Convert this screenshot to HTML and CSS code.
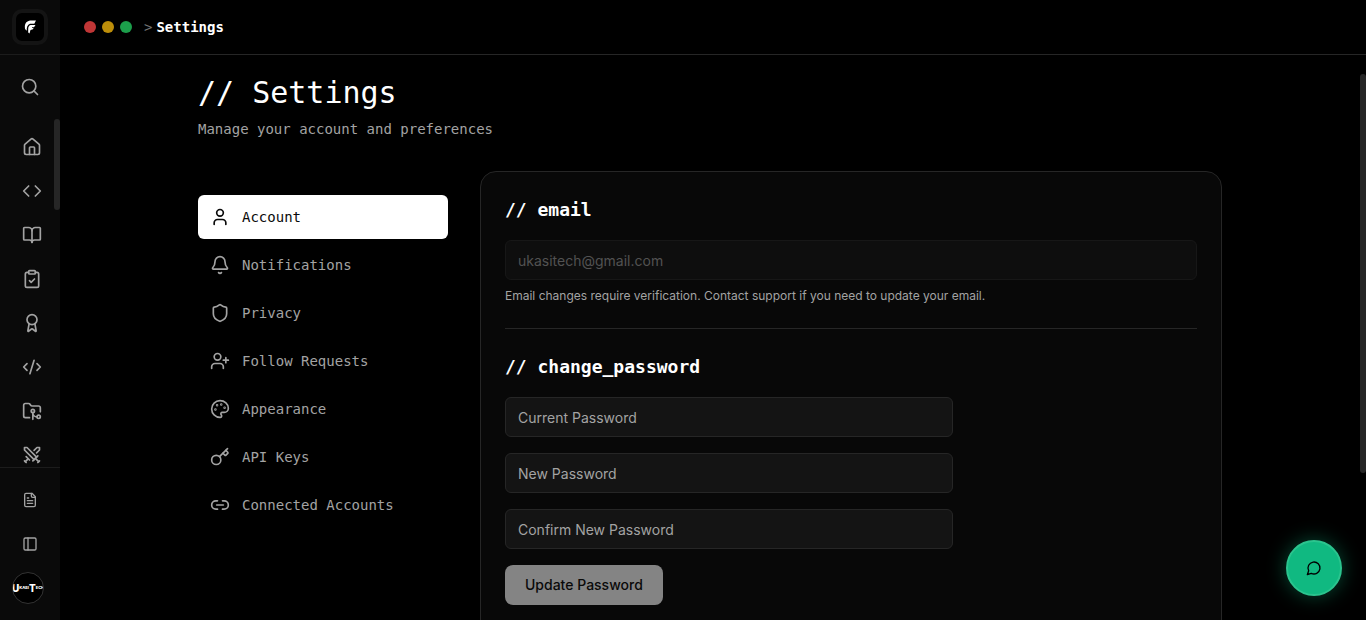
FILE: index.html
```html
<!DOCTYPE html>
<html lang="en">
<head>
    <meta charset="UTF-8">
    <meta name="viewport" content="width=device-width, initial-scale=1.0">
    <title>Settings</title>
    <link rel="stylesheet" href="styles.css">
</head>
<body>
    <div class="app">
        <aside class="sidebar">
            <div class="sidebar-head">
                <a href="#" class="logo" aria-label="Home">
                    <svg viewBox="0 0 28 28" width="28" height="28" fill="#fff"><path d="M20 7.500h-6c-3 .5-5 2.500-5.200 5.500l.2 3 1.800 1.800c-.3-3.500.7-6 3.200-7h4.300z"/><path d="M19.500 12h-5c-1.500.5-2.300 2-2.300 4v3.500l1.300 1 1-3.500 2.500-.8.500-1.200h-1.500v-.8h2z"/></svg>
                </a>
            </div>
            <div class="sidebar-search">
                <button type="button" class="side-btn" aria-label="Search">
                    <svg class="icon" viewBox="0 0 24 24"><circle cx="11" cy="11" r="8"/><path d="m21 21-4.300-4.300"/></svg>
                </button>
            </div>
            <nav class="sidebar-nav" aria-label="Main">
                <a href="#" class="side-btn" aria-label="Dashboard">
                    <svg class="icon" viewBox="0 0 24 24"><path d="M15 21v-8a1 1 0 0 0-1-1h-4a1 1 0 0 0-1 1v8"/><path d="M3 10a2 2 0 0 1 .709-1.528l7-5.999a2 2 0 0 1 2.582 0l7 5.999A2 2 0 0 1 21 10v9a2 2 0 0 1-2 2H5a2 2 0 0 1-2-2z"/></svg>
                </a>
                <a href="#" class="side-btn" aria-label="Code">
                    <svg class="icon" viewBox="0 0 24 24"><path d="m16 18 6-6-6-6"/><path d="m8 6-6 6 6 6"/></svg>
                </a>
                <a href="#" class="side-btn" aria-label="Courses">
                    <svg class="icon" viewBox="0 0 24 24"><path d="M12 7v14"/><path d="M3 18a1 1 0 0 1-1-1V4a1 1 0 0 1 1-1h5a4 4 0 0 1 4 4 4 4 0 0 1 4-4h5a1 1 0 0 1 1 1v13a1 1 0 0 1-1 1h-6a3 3 0 0 0-3 3 3 3 0 0 0-3-3z"/></svg>
                </a>
                <a href="#" class="side-btn" aria-label="Assessments">
                    <svg class="icon" viewBox="0 0 24 24"><rect width="8" height="4" x="8" y="2" rx="1"/><path d="M16 4h2a2 2 0 0 1 2 2v14a2 2 0 0 1-2 2H6a2 2 0 0 1-2-2V6a2 2 0 0 1 2-2h2"/><path d="m9 14 2 2 4-4"/></svg>
                </a>
                <a href="#" class="side-btn" aria-label="Certificates">
                    <svg class="icon" viewBox="0 0 24 24"><path d="m15.477 12.890 1.515 8.526a.5.5 0 0 1-.810.470l-3.580-2.687a1 1 0 0 0-1.197 0l-3.586 2.686a.5.5 0 0 1-.810-.469l1.514-8.526"/><circle cx="12" cy="8" r="6"/></svg>
                </a>
                <a href="#" class="side-btn" aria-label="Challenges">
                    <svg class="icon" viewBox="0 0 24 24"><path d="m18 16 4-4-4-4"/><path d="m6 8-4 4 4 4"/><path d="m14.500 4-5 16"/></svg>
                </a>
                <a href="#" class="side-btn" aria-label="Projects">
                    <svg class="icon" viewBox="0 0 24 24"><path d="M9 20H4a2 2 0 0 1-2-2V5a2 2 0 0 1 2-2h3.900a2 2 0 0 1 1.690.900l.810 1.200a2 2 0 0 0 1.670.900H20a2 2 0 0 1 2 2v5"/><circle cx="13" cy="12" r="2"/><path d="M18 19c-2.800 0-5-2.200-5-5v8"/><circle cx="20" cy="19" r="2"/></svg>
                </a>
                <a href="#" class="side-btn" aria-label="Battles">
                    <svg class="icon" viewBox="0 0 24 24"><path d="M14.500 17.500 3 6V3h3l11.500 11.500"/><path d="m13 19 6-6"/><path d="m16 16 4 4"/><path d="m19 21 2-2"/><path d="M14.500 6.500 18 3h3v3l-3.500 3.500"/><path d="m5 14 4 4"/><path d="m7 17-3 3"/><path d="m3 19 2 2"/></svg>
                </a>
                <span class="scroll-thumb scroll-thumb-side"></span>
            </nav>
            <div class="sidebar-foot">
                <button type="button" class="side-btn" aria-label="Docs">
                    <svg class="icon icon-sm" viewBox="0 0 24 24"><path d="M15 2H6a2 2 0 0 0-2 2v16a2 2 0 0 0 2 2h12a2 2 0 0 0 2-2V7z"/><path d="M14 2v4a2 2 0 0 0 2 2h4"/><path d="M10 9H8"/><path d="M16 13H8"/><path d="M16 17H8"/></svg>
                </button>
                <button type="button" class="side-btn" aria-label="Toggle sidebar">
                    <svg class="icon icon-sm" viewBox="0 0 24 24"><rect width="18" height="18" x="3" y="3" rx="2"/><path d="M9 3v18"/></svg>
                </button>
                <button type="button" class="side-btn profile-btn" aria-label="Profile">
                    <span class="avatar"><span class="big">U</span><span class="small">KASI</span><span class="big">T</span><span class="small">ECH</span></span>
                </button>
            </div>
        </aside>

        <div class="content">
            <header class="topbar">
                <div class="dots">
                    <span class="dot red"></span>
                    <span class="dot yellow"></span>
                    <span class="dot green"></span>
                </div>
                <div class="crumb"><span class="crumb-sep">&gt;</span><span>Settings</span></div>
            </header>

            <main class="main">
                <div class="page">
                    <h1>// Settings</h1>
                    <p class="subtitle">Manage your account and preferences</p>

                    <div class="layout">
                        <nav class="tabs" aria-label="Settings">
                            <button type="button" class="tab active">
                                <svg class="icon" viewBox="0 0 24 24"><path d="M19 21v-2a4 4 0 0 0-4-4H9a4 4 0 0 0-4 4v2"/><circle cx="12" cy="7" r="4"/></svg>
                                Account
                            </button>
                            <button type="button" class="tab">
                                <svg class="icon" viewBox="0 0 24 24"><path d="M10.268 21a2 2 0 0 0 3.464 0"/><path d="M3.262 15.326A1 1 0 0 0 4 17h16a1 1 0 0 0 .740-1.673C19.410 13.956 18 12.499 18 8A6 6 0 0 0 6 8c0 4.499-1.411 5.956-2.738 7.326"/></svg>
                                Notifications
                            </button>
                            <button type="button" class="tab">
                                <svg class="icon" viewBox="0 0 24 24"><path d="M20 13c0 5-3.500 7.500-7.660 8.950a1 1 0 0 1-.670-.010C7.500 20.500 4 18 4 13V6a1 1 0 0 1 1-1c2 0 4.500-1.200 6.240-2.720a1.170 1.170 0 0 1 1.520 0C14.510 3.810 17 5 19 5a1 1 0 0 1 1 1z"/></svg>
                                Privacy
                            </button>
                            <button type="button" class="tab">
                                <svg class="icon" viewBox="0 0 24 24"><path d="M16 21v-2a4 4 0 0 0-4-4H6a4 4 0 0 0-4 4v2"/><circle cx="9" cy="7" r="4"/><path d="M19 8v6"/><path d="M22 11h-6"/></svg>
                                Follow Requests
                            </button>
                            <button type="button" class="tab">
                                <svg class="icon" viewBox="0 0 24 24"><path d="M12 22a1 1 0 0 1 0-20 10 9 0 0 1 10 9 5 5 0 0 1-5 5h-2.250a1.750 1.750 0 0 0-1.400 2.800l.300.400a1.750 1.750 0 0 1-1.400 2.800z"/><circle cx="13.500" cy="6.500" r=".5"/><circle cx="17.500" cy="10.500" r=".5"/><circle cx="6.500" cy="12.500" r=".5"/><circle cx="8.500" cy="7.500" r=".5"/></svg>
                                Appearance
                            </button>
                            <button type="button" class="tab">
                                <svg class="icon" viewBox="0 0 24 24"><path d="m15.500 7.500 2.300 2.300a1 1 0 0 0 1.400 0l2.100-2.100a1 1 0 0 0 0-1.400L19 4"/><path d="m21 2-9.600 9.600"/><circle cx="7.500" cy="15.500" r="5.500"/></svg>
                                API Keys
                            </button>
                            <button type="button" class="tab">
                                <svg class="icon" viewBox="0 0 24 24"><path d="M9 17H7A5 5 0 0 1 7 7h2"/><path d="M15 7h2a5 5 0 1 1 0 10h-2"/><path d="M8 12h8"/></svg>
                                Connected Accounts
                            </button>
                        </nav>

                        <div class="card">
                            <section class="section">
                                <h2><label for="email">// email</label></h2>
                                <input type="email" id="email" class="field" value="ukasitech@gmail.com" disabled>
                                <p class="hint">Email changes require verification. Contact support if you need to update your email.</p>
                            </section>
                            <section class="section">
                                <h2>// change_password</h2>
                                <form class="password-form">
                                    <input type="password" class="field" placeholder="Current Password" aria-label="Current Password">
                                    <input type="password" class="field" placeholder="New Password" aria-label="New Password">
                                    <input type="password" class="field" placeholder="Confirm New Password" aria-label="Confirm New Password">
                                    <button type="submit" class="btn" disabled>Update Password</button>
                                </form>
                            </section>
                        </div>
                    </div>
                </div>
                <span class="scroll-thumb scroll-thumb-main"></span>
            </main>
        </div>

        <button type="button" class="chat-btn" aria-label="Open chat">
            <svg class="icon icon-sm" viewBox="0 0 24 24"><path d="M7.900 20A9 9 0 1 0 4 16.100L2 22Z"/></svg>
        </button>
    </div>
</body>
</html>
```
FILE: styles.css
```css
* { box-sizing: border-box; }
body { margin: 0; background: #000; color: #fff; font-family: Inter, sans-serif; font-size: 14px; line-height: 20px; }
h1, h2, p { margin: 0; }
button { font: inherit; border: none; cursor: pointer; }

.app { display: flex; height: 100vh; overflow: hidden; }
.icon { width: 20px; height: 20px; flex-shrink: 0; fill: none; stroke: currentColor; stroke-width: 2; stroke-linecap: round; stroke-linejoin: round; }
.icon-sm { width: 16px; height: 16px; }

/* sidebar */
.sidebar { display: flex; flex-direction: column; width: 60px; flex-shrink: 0; background: #0a0a0a; }
.sidebar-head { display: flex; align-items: center; justify-content: center; height: 55px; border-bottom: 1px solid #1c1c1c; }
.logo { display: flex; border: 4px solid #141414; border-radius: 10px; background: #000; }
.sidebar-search { display: flex; justify-content: center; padding: 12px 0; }
.side-btn { display: flex; align-items: center; justify-content: center; width: 40px; height: 40px; flex-shrink: 0; padding: 0; background: none; color: #a3a3a3; }
.sidebar-nav { position: relative; display: flex; flex: 1; flex-direction: column; gap: 4px; min-height: 0; padding: 8px 12px; overflow: hidden; }
.sidebar-foot { display: flex; flex-direction: column; gap: 4px; padding: 12px; border-top: 1px solid #1c1c1c; }
.sidebar-foot .side-btn { width: 36px; }
.sidebar-foot .profile-btn { justify-content: flex-start; }
.avatar { display: flex; align-items: center; justify-content: center; width: 32px; height: 32px; overflow: hidden; border: 1px solid #333; border-radius: 50%; background: #000; color: #fff; font-weight: 800; line-height: 12px; }
.avatar .big { font-size: 10px; }
.avatar .small { font-size: 4px; }

.scroll-thumb { position: absolute; right: 0; width: 6px; border-radius: 3px; background: #262626; }
.scroll-thumb-side { top: 0; height: 91px; }
.scroll-thumb-main { top: 19px; height: 399px; }

/* top bar */
.content { display: flex; flex: 1; flex-direction: column; min-width: 0; }
.topbar { display: flex; align-items: center; gap: 12px; height: 55px; flex-shrink: 0; padding: 0 24px; border-bottom: 1px solid #262626; }
.dots { display: flex; gap: 6px; }
.dot { width: 12px; height: 12px; border-radius: 50%; }
.red { background: #c03636; }
.yellow { background: #bd8e0a; }
.green { background: #1c9e4b; }
.crumb { display: flex; gap: 4px; font-family: "DejaVu Sans Mono", monospace; font-weight: 600; }
.crumb-sep { color: #737373; font-weight: 400; }

/* page */
.main { position: relative; flex: 1; min-height: 0; padding: 20px 6px 0 0; overflow: hidden; }
.page { max-width: 1024px; margin: 0 auto; }
h1, h2, .subtitle, .tab { font-family: "DejaVu Sans Mono", monospace; }
h1 { font-size: 30px; line-height: 36px; font-weight: 400; }
.subtitle { margin: 8px 0 32px; color: #a3a3a3; }
.layout { display: grid; grid-template-columns: 250px 1fr; gap: 32px; }

.tabs { display: flex; flex-direction: column; gap: 4px; padding-top: 24px; }
.tab { display: flex; align-items: center; gap: 12px; height: 44px; padding: 0 12px; border-radius: 6px; background: none; color: #a3a3a3; text-align: left; }
.tab.active { background: #fff; color: #0a0a0a; }

.card { padding: 24px; border: 1px solid #262626; border-radius: 16px; background: #080808; }
.section + .section { margin-top: 24px; padding-top: 24px; border-top: 1px solid #262626; }
h2 { margin-bottom: 16px; font-size: 18px; line-height: 28px; font-weight: 600; }
.field { display: block; width: 100%; height: 40px; padding: 0 12px; border: 1px solid #262626; border-radius: 6px; background: #141414; color: #fff; font: inherit; }
.field::placeholder { color: #a3a3a3; opacity: 1; }
.field:disabled { border-color: #171717; background: #0e0e0e; color: #525252; }
.hint { margin-top: 8px; color: #a3a3a3; font-size: 12px; line-height: 16px; }
.password-form { display: flex; flex-direction: column; align-items: flex-start; gap: 16px; max-width: 448px; padding-bottom: 48px; }
.btn { height: 40px; padding: 0 20px; border-radius: 8px; background: #848484; color: #0a0a0a; font-weight: 500; }

.chat-btn { position: fixed; right: 24px; bottom: 24px; display: flex; align-items: center; justify-content: center; width: 56px; height: 56px; border: 2px solid #2bc48e; border-radius: 50%; background: #10b981; color: #000; box-shadow: 0 0 20px rgba(16, 185, 129, 0.4); }
```
